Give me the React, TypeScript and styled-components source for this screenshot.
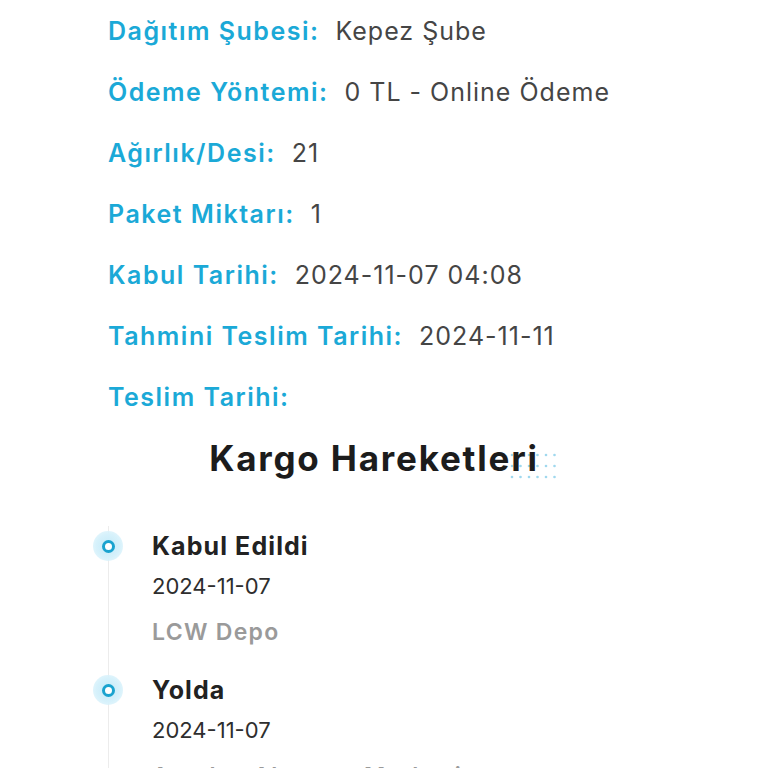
import styled, { createGlobalStyle } from "styled-components";

const GlobalStyle = createGlobalStyle`
  html, body {
    margin: 0;
    padding: 0;
    background: #ffffff;
  }
  body {
    font-family: "Inter", "Noto Sans", sans-serif;
    overflow: hidden;
  }
`;

const Page = styled.div`
  width: 768px;
  height: 768px;
  overflow: hidden;
  background: #fff;
`;

const InfoList = styled.div`
  display: flex;
  flex-direction: column;
  padding-left: 108px;
`;

const InfoRow = styled.div`
  height: 61px;
  display: flex;
  align-items: center;
  gap: 16px;
  font-size: 25px;
  white-space: nowrap;
`;

const Label = styled.span`
  color: #1ba9d7;
  font-weight: 600;
  letter-spacing: 1.5px;
`;

const Value = styled.span`
  color: #454545;
  font-weight: 400;
  letter-spacing: 1px;
`;

const TitleWrap = styled.div`
  height: 62px;
  display: flex;
  align-items: center;
  justify-content: center;
  padding-right: 20px;
`;

const Title = styled.h2`
  position: relative;
  margin: 0;
  font-size: 35px;
  font-weight: 700;
  color: #1c1c1c;
  letter-spacing: 1.8px;
`;

const TitleText = styled.span`
  position: relative;
  z-index: 1;
`;

const Dots = styled.svg`
  position: absolute;
  right: -20px;
  top: 15px;
`;

const Timeline = styled.div`
  position: relative;
  margin-top: 37px;
  margin-left: 108px;
  border-left: 1px solid #ececec;
  padding-left: 43px;
`;

const Item = styled.div`
  position: relative;
  padding-bottom: 12px;
`;

const Marker = styled.span`
  position: absolute;
  left: -59px;
  top: 5px;
  width: 30px;
  height: 30px;
  border-radius: 50%;
  background: radial-gradient(circle, #c4eaf8 0%, #d6f1fb 55%, rgba(225, 245, 252, 0.5) 100%);
  display: flex;
  align-items: center;
  justify-content: center;

  &::after {
    content: "";
    width: 7px;
    height: 7px;
    border-radius: 50%;
    border: 3.5px solid #1aa3cf;
    background: #fff;
  }
`;

const ItemTitle = styled.div`
  line-height: 40px;
  font-size: 25px;
  font-weight: 700;
  color: #222;
  letter-spacing: 1.1px;
`;

const ItemDate = styled.div`
  line-height: 40px;
  font-size: 22px;
  font-weight: 400;
  color: #2e2e2e;
`;

const ItemPlace = styled.div`
  line-height: 52px;
  font-size: 23px;
  font-weight: 600;
  color: #9a9a9a;
  letter-spacing: 1.3px;
`;

const info = [
  { label: "Dağıtım Şubesi:", value: "Kepez Şube" },
  { label: "Ödeme Yöntemi:", value: "0 TL - Online Ödeme" },
  { label: "Ağırlık/Desi:", value: "21" },
  { label: "Paket Miktarı:", value: "1" },
  { label: "Kabul Tarihi:", value: "2024-11-07 04:08" },
  { label: "Tahmini Teslim Tarihi:", value: "2024-11-11" },
  { label: "Teslim Tarihi:", value: "" },
];

const moves = [
  { title: "Kabul Edildi", date: "2024-11-07", place: "LCW Depo" },
  { title: "Yolda", date: "2024-11-07", place: "Antalya Aktarma Merkezi" },
];

function DotGrid() {
  const dots = [];
  for (let r = 0; r < 3; r++) {
    for (let c = 0; c < 6; c++) {
      dots.push(<circle key={`${r}-${c}`} cx={3 + c * 8.5} cy={3 + r * 11} r={1.3} fill="#9fd8ee" />);
    }
  }
  return (
    <Dots width="50" height="30" viewBox="0 0 50 30">
      {dots}
    </Dots>
  );
}

export default function App() {
  return (
    <Page>
      <GlobalStyle />
      <InfoList>
        {info.map((row) => (
          <InfoRow key={row.label}>
            <Label>{row.label}</Label>
            {row.value && <Value>{row.value}</Value>}
          </InfoRow>
        ))}
      </InfoList>
      <TitleWrap>
        <Title>
          <DotGrid />
          <TitleText>Kargo Hareketleri</TitleText>
        </Title>
      </TitleWrap>
      <Timeline>
        {moves.map((m) => (
          <Item key={m.title}>
            <Marker />
            <ItemTitle>{m.title}</ItemTitle>
            <ItemDate>{m.date}</ItemDate>
            <ItemPlace>{m.place}</ItemPlace>
          </Item>
        ))}
      </Timeline>
    </Page>
  );
}
